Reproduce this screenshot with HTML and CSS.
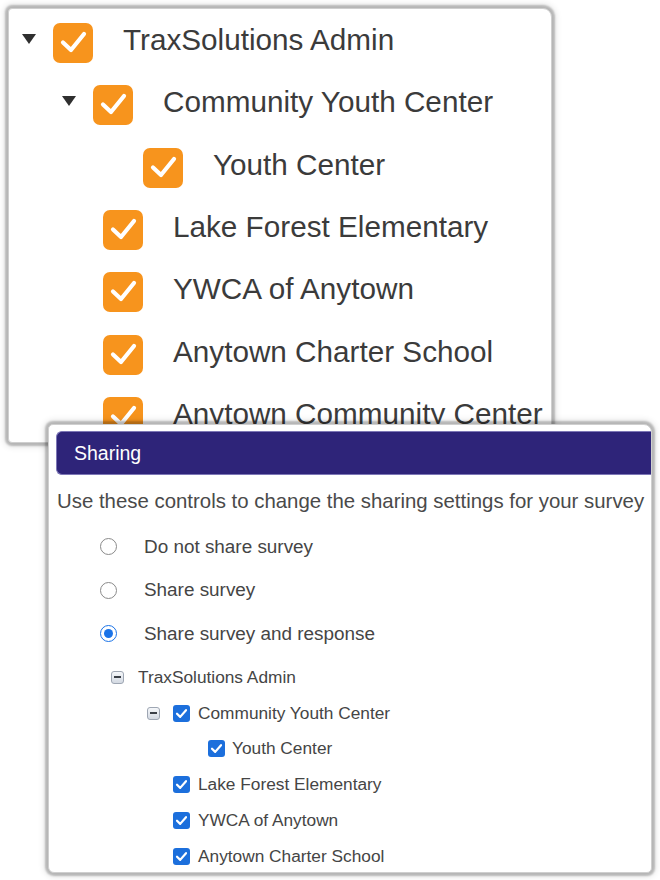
FILE: index.html
```html
<!DOCTYPE html>
<html lang="en">
<head>
<meta charset="utf-8">
<title>Sharing</title>
<link rel="stylesheet" href="styles.css">
</head>
<body>
<div class="tree-panel">
  <div class="big-row lvl0">
    <svg class="caret" viewBox="0 0 14 11"><polygon points="0,0 14,0 7,10" fill="#2f2f2f"/></svg>
    <svg class="obox" viewBox="0 0 40 40"><rect width="40" height="40" rx="7" fill="#f7941d"/><polyline points="10,19.5 18,27 31,11" fill="none" stroke="#fff" stroke-width="4.2" stroke-linecap="round" stroke-linejoin="round"/></svg>
    <span class="big-label">TraxSolutions Admin</span>
  </div>
  <div class="big-row lvl1">
    <svg class="caret" viewBox="0 0 14 11"><polygon points="0,0 14,0 7,10" fill="#2f2f2f"/></svg>
    <svg class="obox" viewBox="0 0 40 40"><rect width="40" height="40" rx="7" fill="#f7941d"/><polyline points="10,19.5 18,27 31,11" fill="none" stroke="#fff" stroke-width="4.2" stroke-linecap="round" stroke-linejoin="round"/></svg>
    <span class="big-label">Community Youth Center</span>
  </div>
  <div class="big-row lvl2">
    <svg class="obox" viewBox="0 0 40 40"><rect width="40" height="40" rx="7" fill="#f7941d"/><polyline points="10,19.5 18,27 31,11" fill="none" stroke="#fff" stroke-width="4.2" stroke-linecap="round" stroke-linejoin="round"/></svg>
    <span class="big-label">Youth Center</span>
  </div>
  <div class="big-row leaf1">
    <svg class="obox" viewBox="0 0 40 40"><rect width="40" height="40" rx="7" fill="#f7941d"/><polyline points="10,19.5 18,27 31,11" fill="none" stroke="#fff" stroke-width="4.2" stroke-linecap="round" stroke-linejoin="round"/></svg>
    <span class="big-label">Lake Forest Elementary</span>
  </div>
  <div class="big-row leaf1">
    <svg class="obox" viewBox="0 0 40 40"><rect width="40" height="40" rx="7" fill="#f7941d"/><polyline points="10,19.5 18,27 31,11" fill="none" stroke="#fff" stroke-width="4.2" stroke-linecap="round" stroke-linejoin="round"/></svg>
    <span class="big-label">YWCA of Anytown</span>
  </div>
  <div class="big-row leaf1">
    <svg class="obox" viewBox="0 0 40 40"><rect width="40" height="40" rx="7" fill="#f7941d"/><polyline points="10,19.5 18,27 31,11" fill="none" stroke="#fff" stroke-width="4.2" stroke-linecap="round" stroke-linejoin="round"/></svg>
    <span class="big-label">Anytown Charter School</span>
  </div>
  <div class="big-row leaf1">
    <svg class="obox" viewBox="0 0 40 40"><rect width="40" height="40" rx="7" fill="#f7941d"/><polyline points="10,19.5 18,27 31,11" fill="none" stroke="#fff" stroke-width="4.2" stroke-linecap="round" stroke-linejoin="round"/></svg>
    <span class="big-label">Anytown Community Center</span>
  </div>
</div>

<div class="share-panel">
  <div class="share-header">Sharing</div>
  <p class="share-desc">Use these controls to change the sharing settings for your survey</p>
  <div class="radio-list">
    <div class="radio-row"><span class="radio"></span><span class="radio-label">Do not share survey</span></div>
    <div class="radio-row"><span class="radio"></span><span class="radio-label">Share survey</span></div>
    <div class="radio-row"><span class="radio radio-on"><span class="radio-dot"></span></span><span class="radio-label">Share survey and response</span></div>
  </div>
  <div class="small-tree">
    <div class="s-row s-root">
      <span class="minus-box"><span class="minus"></span></span>
      <span class="s-label">TraxSolutions Admin</span>
    </div>
    <div class="s-row s-lvl1">
      <span class="minus-box"><span class="minus"></span></span>
      <svg class="bbox" viewBox="0 0 17 17"><rect width="17" height="17" rx="3" fill="#1c6fdc"/><polyline points="4,8.7 7.2,11.9 13,5.2" fill="none" stroke="#fff" stroke-width="2.2" stroke-linecap="round" stroke-linejoin="round"/></svg>
      <span class="s-label">Community Youth Center</span>
    </div>
    <div class="s-row s-lvl2">
      <svg class="bbox" viewBox="0 0 17 17"><rect width="17" height="17" rx="3" fill="#1c6fdc"/><polyline points="4,8.7 7.2,11.9 13,5.2" fill="none" stroke="#fff" stroke-width="2.2" stroke-linecap="round" stroke-linejoin="round"/></svg>
      <span class="s-label">Youth Center</span>
    </div>
    <div class="s-row s-leaf">
      <svg class="bbox" viewBox="0 0 17 17"><rect width="17" height="17" rx="3" fill="#1c6fdc"/><polyline points="4,8.7 7.2,11.9 13,5.2" fill="none" stroke="#fff" stroke-width="2.2" stroke-linecap="round" stroke-linejoin="round"/></svg>
      <span class="s-label">Lake Forest Elementary</span>
    </div>
    <div class="s-row s-leaf">
      <svg class="bbox" viewBox="0 0 17 17"><rect width="17" height="17" rx="3" fill="#1c6fdc"/><polyline points="4,8.7 7.2,11.9 13,5.2" fill="none" stroke="#fff" stroke-width="2.2" stroke-linecap="round" stroke-linejoin="round"/></svg>
      <span class="s-label">YWCA of Anytown</span>
    </div>
    <div class="s-row s-leaf">
      <svg class="bbox" viewBox="0 0 17 17"><rect width="17" height="17" rx="3" fill="#1c6fdc"/><polyline points="4,8.7 7.2,11.9 13,5.2" fill="none" stroke="#fff" stroke-width="2.2" stroke-linecap="round" stroke-linejoin="round"/></svg>
      <span class="s-label">Anytown Charter School</span>
    </div>
  </div>
</div>
</body>
</html>
```

FILE: styles.css
```css
html {
  background: #ffffff;
}
body {
  margin: 0;
  padding: 8px;
  font-family: "Liberation Sans", Arial, sans-serif;
}

/* ---------- top (large) tree panel ---------- */
.tree-panel {
  width: 544px;
  height: 435px;
  box-sizing: border-box;
  padding-top: 3px;
  background: #fff;
  border: 1px solid #cfcfcf;
  border-radius: 4px 9px 4px 4px;
  box-shadow: 0 0 2px 3px rgba(0, 0, 0, 0.22), 0 0 6px 4px rgba(0, 0, 0, 0.1);
  overflow: hidden;
}
.big-row {
  display: flex;
  align-items: center;
  height: 62.3px;
}
.lvl0 { padding-left: 13px; }
.lvl1 { padding-left: 53px; }
.lvl2 { padding-left: 134px; }
.leaf1 { padding-left: 94px; }

.caret {
  width: 14px;
  height: 11px;
  flex: none;
  margin-right: 17px;
  margin-bottom: 8px;
}
.obox {
  width: 40px;
  height: 40px;
  flex: none;
}
.big-label {
  margin-left: 30px;
  margin-bottom: 6px;
  font-size: 29.7px;
  line-height: 34px;
  color: #3b3b3b;
  white-space: nowrap;
}

/* ---------- bottom sharing panel ---------- */
.share-panel {
  position: relative;
  z-index: 2;
  margin-top: -19px;
  margin-left: 40px;
  width: 604px;
  height: 449px;
  box-sizing: border-box;
  padding-top: 6px;
  background: #fff;
  border: 1px solid #cfcfcf;
  border-radius: 5px 8px 5px 6px;
  box-shadow: 0 0 2px 3px rgba(0, 0, 0, 0.22), 0 0 6px 4px rgba(0, 0, 0, 0.1);
  overflow: hidden;
  color: #454545;
}
.share-header {
  margin-left: 7px;
  height: 44px;
  box-sizing: border-box;
  padding-left: 17px;
  display: flex;
  align-items: center;
  background: #2e2479;
  border: 1px solid #7d77b6;
  border-right: none;
  border-radius: 6px 0 0 6px;
  color: #ffffff;
  font-size: 19.5px;
}
.share-desc {
  margin: 14px 0 0 8px;
  font-size: 20.4px;
  line-height: 24px;
  white-space: nowrap;
  color: #4a4a4a;
}
.radio-list {
  margin-top: 12px;
  padding-left: 51px;
}
.radio-row {
  display: flex;
  align-items: center;
  height: 43.5px;
}
.radio {
  width: 17px;
  height: 17px;
  box-sizing: border-box;
  border: 1.5px solid #8a8a8a;
  border-radius: 50%;
  flex: none;
  display: flex;
  align-items: center;
  justify-content: center;
}
.radio-on {
  border: 1.8px solid #1a73e8;
}
.radio-dot {
  width: 9px;
  height: 9px;
  border-radius: 50%;
  background: #1a73e8;
}
.radio-label {
  margin-left: 27px;
  font-size: 18.9px;
  color: #454545;
  white-space: nowrap;
}

.small-tree {
  margin-top: 4px;
}
.s-row {
  display: flex;
  align-items: center;
  height: 35.8px;
}
.s-root { padding-left: 62px; }
.s-lvl1 { padding-left: 98px; }
.s-lvl2 { padding-left: 159px; }
.s-leaf { padding-left: 124px; }

.minus-box {
  width: 13px;
  height: 13px;
  box-sizing: border-box;
  border: 1px solid #9ea6b3;
  border-radius: 3px;
  background: linear-gradient(#f5f7fa, #d3d9e2);
  display: flex;
  align-items: center;
  justify-content: center;
  flex: none;
}
.minus {
  width: 7px;
  height: 2px;
  background: #3a3f47;
}
.s-lvl1 .minus-box { margin-right: 13px; }
.bbox {
  width: 17px;
  height: 17px;
  flex: none;
}
.s-label {
  margin-left: 8px;
  font-size: 17.3px;
  color: #454545;
  white-space: nowrap;
}
.s-root .s-label { margin-left: 14px; }
.s-lvl2 .s-label { margin-left: 7px; }
```
